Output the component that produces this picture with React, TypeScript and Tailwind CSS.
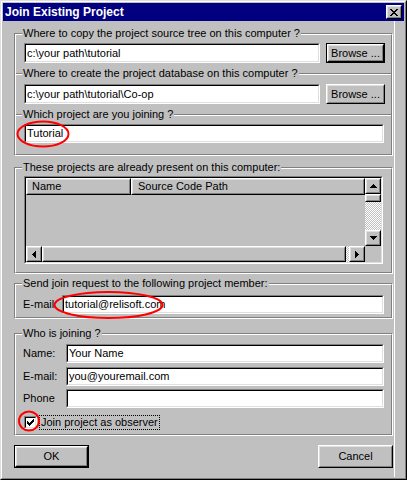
import React from 'react';

const FONT = "font-['Liberation_Sans',Arial,sans-serif]";

// draws a tiny black bitmap glyph from rows of '.' and 'X'
function Pixels({ rows }: { rows: string[] }) {
  const w = rows[0].length;
  const h = rows.length;
  return (
    <svg width={w} height={h} viewBox={`0 0 ${w} ${h}`} shapeRendering="crispEdges" className="block">
      {rows.map((r, y) =>
        r.split('').map((c, x) => (c === 'X' ? <rect key={`${x}-${y}`} x={x} y={y} width={1} height={1} fill="#000" /> : null))
      )}
    </svg>
  );
}

const CLOSE = ['XX....XX', '.XX..XX.', '..XXXX..', '...XX...', '..XXXX..', '.XX..XX.', 'XX....XX'];
const UP = ['...X...', '..XXX..', '.XXXXX.', 'XXXXXXX'];
const DOWN = ['XXXXXXX', '.XXXXX.', '..XXX..', '...X...'];
const LEFT = ['...X', '..XX', '.XXX', 'XXXX', '.XXX', '..XX', '...X'];
const RIGHT = ['X...', 'XX..', 'XXX.', 'XXXX', 'XXX.', 'XX..', 'X...'];
const CHECK = ['......X', '.....XX', 'X...XXX', 'XX.XXX.', 'XXXXX..', '.XXX...', '..X....'];

function Raised({ className = '', children }: { className?: string; children?: React.ReactNode }) {
  return (
    <div className={`border border-t-white border-l-white border-r-black border-b-black bg-[#c0c0c0] ${className}`}>
      <div className="h-full border border-t-[#dfdfdf] border-l-[#dfdfdf] border-r-[#808080] border-b-[#808080] flex items-center justify-center">
        {children}
      </div>
    </div>
  );
}

function Button({ label, w, h, isDefault }: { label: string; w: string; h: string; isDefault?: boolean }) {
  if (isDefault) {
    return (
      <div className={`${w} ${h} border border-black`}>
        <Raised className="h-full">{label}</Raised>
      </div>
    );
  }
  return <Raised className={`${w} ${h}`}>{label}</Raised>;
}

function Sunken({ className = '', children }: { className?: string; children?: React.ReactNode }) {
  return (
    <div className={`border border-t-[#808080] border-l-[#808080] border-r-white border-b-white ${className}`}>
      <div className="h-full border border-t-black border-l-black border-r-[#dfdfdf] border-b-[#dfdfdf]">{children}</div>
    </div>
  );
}

function Field({ value, w, h }: { value?: string; w: string; h: string }) {
  return (
    <Sunken className={`${w} ${h}`}>
      <div className="h-full bg-white pl-[1px] flex items-center whitespace-nowrap">{value}</div>
    </Sunken>
  );
}

function Group({ className = '', children }: { className?: string; children: React.ReactNode }) {
  return (
    <div className={`w-[379px] border border-t-[#808080] border-l-[#808080] border-r-white border-b-white ${className}`}>
      <div className="border border-t-white border-l-white border-r-[#808080] border-b-[#808080]">{children}</div>
    </div>
  );
}

function Legend({ text }: { text: string }) {
  return <div className="-mt-[8px] ml-[6px] w-fit h-[13px] leading-[13px] bg-[#c0c0c0] px-[1px] whitespace-nowrap">{text}</div>;
}

function Separator() {
  return <div className="mt-[10px] border-t border-b border-t-[#808080] border-b-white" />;
}

function ScrollBtn({ glyph }: { glyph: string[] }) {
  return (
    <Raised className="w-[16px] h-[16px] shrink-0">
      <Pixels rows={glyph} />
    </Raised>
  );
}

const CHECKER = 'bg-[repeating-conic-gradient(#ffffff_0%_25%,#c0c0c0_0%_50%)] bg-[length:2px_2px]';

function ListView() {
  return (
    <Sunken className="mt-[2px] ml-[8px] w-[359px] h-[88px]">
      <div className="h-full flex flex-col bg-[#c0c0c0]">
        <div className="flex flex-1 min-h-0">
          <div className="flex-1 flex flex-col">
            <div className="flex h-[17px]">
              <Raised className="w-[105px] h-full">
                <span className="w-full pl-[4px]">Name</span>
              </Raised>
              <Raised className="flex-1 h-full">
                <span className="w-full pl-[5px]">Source Code Path</span>
              </Raised>
            </div>
            <div className="flex-1" />
          </div>
          <div className="w-[16px] flex flex-col">
            <ScrollBtn glyph={UP} />
            <Raised className="w-[16px] h-[8px]" />
            <div className={`flex-1 ${CHECKER}`} />
            <ScrollBtn glyph={DOWN} />
          </div>
        </div>
        <div className="flex h-[16px]">
          <ScrollBtn glyph={LEFT} />
          <Raised className="w-[304px] h-full" />
          <div className={`flex-1 ${CHECKER}`} />
          <ScrollBtn glyph={RIGHT} />
          <div className="w-[16px]" />
        </div>
      </div>
    </Sunken>
  );
}

function LabeledRow({ label, labelW, fieldW, value, className = '' }: { label: string; labelW: string; fieldW: string; value?: string; className?: string }) {
  return (
    <div className={`flex items-center pl-[7px] ${className}`}>
      <div className={`${labelW} whitespace-nowrap`}>{label}</div>
      <Field w={fieldW} h="h-[19px]" value={value} />
    </div>
  );
}

export default function App() {
  return (
    <div className={`relative w-[407px] h-[480px] text-[11px] text-black ${FONT}`}>
      <div className="w-full h-full border border-t-[#dfdfdf] border-l-[#dfdfdf] border-r-black border-b-black">
        <div className="h-full border border-t-white border-l-white border-r-[#808080] border-b-[#808080] p-[1px] bg-[#c0c0c0] flex flex-col">
          {/* title bar */}
          <div className="h-[18px] bg-[#000080] flex items-center justify-between pl-[2px] pr-[2px]">
            <span className="text-white font-bold text-[12px] leading-none">Join Existing Project</span>
            <Raised className="w-[16px] h-[14px]">
              <Pixels rows={CLOSE} />
            </Raised>
          </div>

          <div className="flex-1 flex">
            <div className="w-[391px] pl-[11px] pt-[12px] flex flex-col">
              <Group>
                <Legend text="Where to copy the project source tree on this computer ?" />
                <div className="flex mt-[3px] pl-[8px] gap-[6px]">
                  <Field w="w-[296px]" h="h-[20px]" value="c:\your path\tutorial" />
                  <Button label="Browse ..." w="w-[59px]" h="h-[20px]" isDefault />
                </div>
                <Separator />
                <Legend text="Where to create the project database on this computer ?" />
                <div className="flex mt-[4px] pl-[8px] gap-[6px]">
                  <Field w="w-[296px]" h="h-[20px]" value="c:\your path\tutorial\Co-op" />
                  <Button label="Browse ..." w="w-[59px]" h="h-[20px]" />
                </div>
                <Separator />
                <Legend text="Which project are you joining ?" />
                <div className="mt-[3px] pl-[8px] pb-[11px]">
                  <Field w="w-[360px]" h="h-[19px]" value="Tutorial" />
                </div>
              </Group>

              <Group className="mt-[11px]">
                <Legend text="These projects are already present on this computer:" />
                <div className="pb-[8px]">
                  <ListView />
                </div>
              </Group>

              <Group className="mt-[9px]">
                <Legend text="Send join request to the following project member:" />
                <LabeledRow className="mt-[5px] pb-[3px]" label="E-mail:" labelW="w-[39px]" fieldW="w-[322px]" value="tutorial@relisoft.com" />
              </Group>

              <Group className="mt-[14px]">
                <Legend text="Who is joining ?" />
                <LabeledRow className="mt-[4px]" label="Name:" labelW="w-[43px]" fieldW="w-[318px]" value="Your Name" />
                <LabeledRow className="mt-[4px]" label="E-mail:" labelW="w-[43px]" fieldW="w-[318px]" value="you@youremail.com" />
                <LabeledRow className="mt-[3px]" label="Phone" labelW="w-[43px]" fieldW="w-[318px]" />
                <div className="flex items-center mt-[7px] pl-[8px] pb-[4px]">
                  <Sunken className="w-[13px] h-[13px]">
                    <div className="h-full bg-white flex items-center justify-center">
                      <Pixels rows={CHECK} />
                    </div>
                  </Sunken>
                  <div className="ml-[2px] border border-dotted border-black px-[1px] h-[15px] leading-[13px]">Join project as observer</div>
                </div>
              </Group>

              <div className="w-[379px] flex justify-between mt-[9px]">
                <Button label="OK" w="w-[75px]" h="h-[23px]" isDefault />
                <Button label="Cancel" w="w-[75px]" h="h-[23px]" />
              </div>
            </div>
            <div className="flex-1 border-l border-white" />
          </div>
        </div>
      </div>

      {/* red annotation circles */}
      <svg className="absolute inset-0 pointer-events-none" width={407} height={480}>
        <ellipse cx={43} cy={134} rx={25.5} ry={12.5} fill="none" stroke="#ff0000" strokeWidth={2} />
        <ellipse cx={108.5} cy={305} rx={54} ry={13} fill="none" stroke="#ff0000" strokeWidth={2} />
        <ellipse cx={29} cy={421} rx={10} ry={9.5} fill="none" stroke="#ff0000" strokeWidth={2} />
      </svg>
    </div>
  );
}
